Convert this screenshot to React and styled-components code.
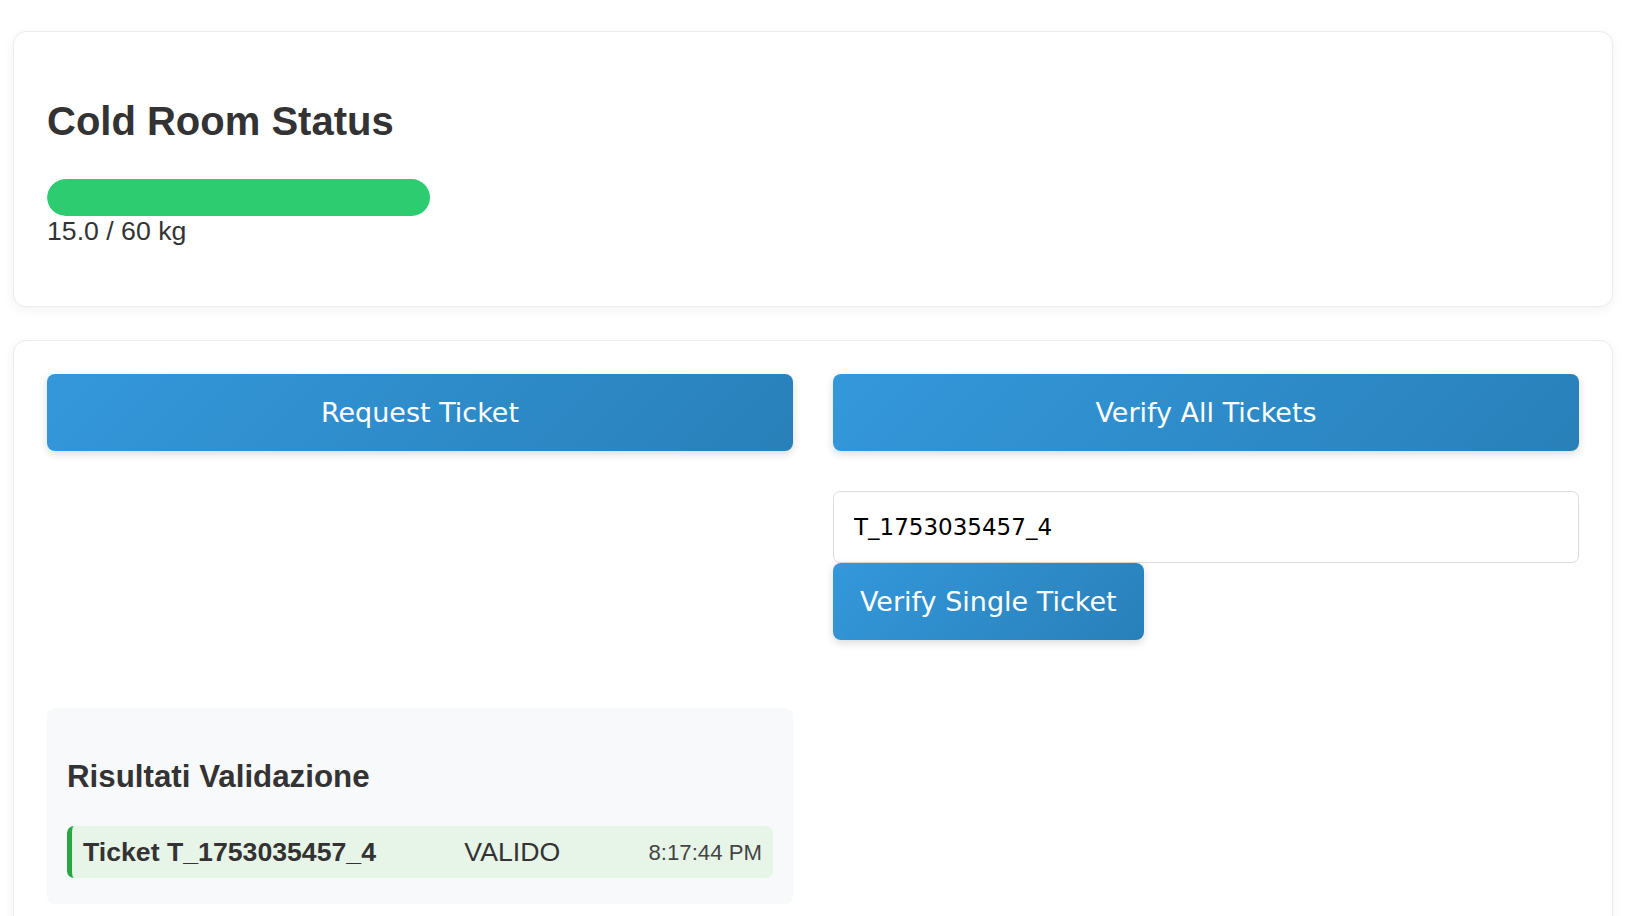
import styled, { createGlobalStyle } from "styled-components";

const GlobalStyle = createGlobalStyle`
  html, body {
    margin: 0;
    padding: 0;
    background: #ffffff;
  }
  body {
    font-family: "Liberation Sans", Arial, sans-serif;
    color: #333333;
  }
  * {
    box-sizing: border-box;
  }
`;

const Page = styled.div`
  padding: 31px 18px 0 13px;
`;

const Card = styled.section`
  background: #ffffff;
  border: 1px solid #ececec;
  border-radius: 13px;
  box-shadow: 0 3px 12px rgba(0, 0, 0, 0.05);
  padding: 33px;
  margin-bottom: 33px;
`;

const Title = styled.h2`
  margin: 32px 0 34px;
  font-size: 40px;
  line-height: 48px;
  font-weight: 700;
  color: #333333;
`;

const Track = styled.div`
  height: 37px;
  border-radius: 20px;
  overflow: hidden;
`;

const Fill = styled.div`
  height: 100%;
  background: #2ecc71;
  border-radius: 20px;
`;

const Capacity = styled.div`
  font-size: 26.67px;
  line-height: 31px;
  margin-bottom: 26px;
  color: #333333;
`;

const Controls = styled.div`
  display: grid;
  grid-template-columns: 1fr 1fr;
  column-gap: 40px;
  row-gap: 41px;
  align-items: start;
`;

const Column = styled.div`
  display: flex;
  flex-direction: column;
  align-items: ${(p) => (p.$start ? "flex-start" : "stretch")};
`;

const ActionButton = styled.button`
  font-family: "DejaVu Sans", Verdana, sans-serif;
  font-size: 27px;
  line-height: 31px;
  color: #ffffff;
  border: none;
  border-radius: 8px;
  background: linear-gradient(135deg, #3498db, #2980b9);
  box-shadow: 0 3px 8px rgba(0, 0, 0, 0.15);
  padding: ${(p) => (p.$compact ? "23px 27px" : "23px 20px")};
  width: ${(p) => (p.$compact ? "auto" : "100%")};
  cursor: pointer;
`;

const TicketInput = styled.input`
  font-family: "DejaVu Sans", Verdana, sans-serif;
  font-size: 23px;
  color: #000000;
  width: 100%;
  height: 72px;
  margin-top: 40px;
  padding: 0 20px;
  border: 1px solid #dcdcdc;
  border-radius: 7px;
  background: #ffffff;
  outline: none;
`;

const Results = styled.div`
  margin-top: 27px;
  background: #f8f9fa;
  border-radius: 8px;
  padding: 20px;
`;

const ResultsTitle = styled.h3`
  margin: 31px 0;
  font-size: 31.3px;
  line-height: 36px;
  font-weight: 700;
  color: #333333;
`;

const ResultRow = styled.div`
  display: flex;
  justify-content: space-between;
  align-items: center;
  background: #e6f5e7;
  border-left: 5px solid #28a745;
  border-radius: 7px;
  padding: 10.5px 11px;
  margin-bottom: 6px;
  font-size: 26.67px;
  line-height: 31px;
`;

const TicketId = styled.strong`
  font-weight: 700;
  color: #333333;
`;

const Status = styled.span`
  color: #333333;
`;

const Time = styled.span`
  font-size: 22.2px;
  color: #444444;
`;

const results = [{ id: "T_1753035457_4", status: "VALIDO", time: "8:17:44 PM" }];

export default function App() {
  const used = 15.0;
  const capacity = 60;

  return (
    <Page>
      <GlobalStyle />
      <Card>
        <Title>Cold Room Status</Title>
        <Track>
          <Fill style={{ width: `${(used / capacity) * 100}%` }} />
        </Track>
        <Capacity>
          {used.toFixed(1)} / {capacity} kg
        </Capacity>
      </Card>

      <Card>
        <Controls>
          <Column>
            <ActionButton>Request Ticket</ActionButton>
          </Column>
          <Column $start>
            <ActionButton>Verify All Tickets</ActionButton>
            <TicketInput defaultValue="T_1753035457_4" />
            <ActionButton $compact>Verify Single Ticket</ActionButton>
          </Column>
          <Results>
            <ResultsTitle>Risultati Validazione</ResultsTitle>
            {results.map((r) => (
              <ResultRow key={r.id}>
                <TicketId>Ticket {r.id}</TicketId>
                <Status>{r.status}</Status>
                <Time>{r.time}</Time>
              </ResultRow>
            ))}
          </Results>
        </Controls>
      </Card>
    </Page>
  );
}
